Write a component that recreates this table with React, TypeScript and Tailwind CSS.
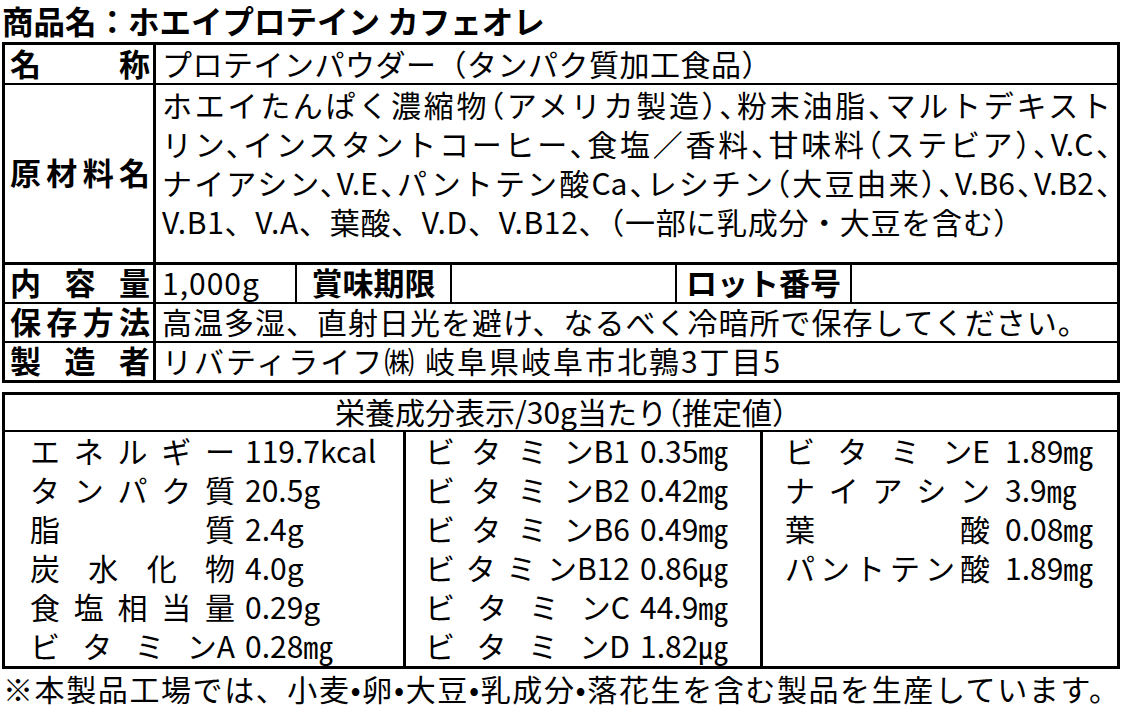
import React from 'react';

function Label({ text }: { text: string }) {
  return (
    <div className="flex w-[151px] shrink-0 items-center border-r-[3px] border-black pb-[3px] pl-[5px] pr-[3px] text-[31px] font-bold leading-[34px]">
      <span className="block w-full whitespace-nowrap text-justify [text-align-last:justify]">{text}</span>
    </div>
  );
}

function Spread({ parts }: { parts: string[] }) {
  return (
    <span className="flex w-[205px] shrink-0 justify-between whitespace-nowrap">
      {parts.map((p, i) => (
        <span key={i}>{p}</span>
      ))}
    </span>
  );
}

type Item = { parts: string[]; value: string };

function NutCol({ items, className, gap }: { items: Item[]; className: string; gap: string }) {
  return (
    <div className={className}>
      {items.map((it, i) => (
        <div key={i} className="flex h-[39px] items-center pb-[4px] leading-[34px]">
          <Spread parts={it.parts} />
          <span className={`whitespace-nowrap ${gap}`}>{it.value}</span>
        </div>
      ))}
    </div>
  );
}

export default function App() {
  const col1: Item[] = [
    { parts: ['エ', 'ネ', 'ル', 'ギ', 'ー'], value: '119.7kcal' },
    { parts: ['タ', 'ン', 'パ', 'ク', '質'], value: '20.5g' },
    { parts: ['脂', '質'], value: '2.4g' },
    { parts: ['炭', '水', '化', '物'], value: '4.0g' },
    { parts: ['食', '塩', '相', '当', '量'], value: '0.29g' },
    { parts: ['ビ', 'タ', 'ミ', 'ンA'], value: '0.28㎎' },
  ];
  const col2: Item[] = [
    { parts: ['ビ', 'タ', 'ミ', 'ンB1'], value: '0.35㎎' },
    { parts: ['ビ', 'タ', 'ミ', 'ンB2'], value: '0.42㎎' },
    { parts: ['ビ', 'タ', 'ミ', 'ンB6'], value: '0.49㎎' },
    { parts: ['ビ', 'タ', 'ミ', 'ンB12'], value: '0.86㎍' },
    { parts: ['ビ', 'タ', 'ミ', 'ンC'], value: '44.9㎎' },
    { parts: ['ビ', 'タ', 'ミ', 'ンD'], value: '1.82㎍' },
  ];
  const col3: Item[] = [
    { parts: ['ビ', 'タ', 'ミ', 'ンE'], value: '1.89㎎' },
    { parts: ['ナ', 'イ', 'ア', 'シ', 'ン'], value: '3.9㎎' },
    { parts: ['葉', '酸'], value: '0.08㎎' },
    { parts: ['パ', 'ン', 'ト', 'テ', 'ン', '酸'], value: '1.89㎎' },
  ];

  return (
    <div className="h-[709px] w-[1122px] overflow-hidden bg-white font-['Noto_Sans_CJK_JP',sans-serif] text-black">
      {/* title */}
      <div className="flex h-[42px] items-center pb-[3px] pl-[2px]">
        <h1 className="whitespace-nowrap text-[31.5px] font-bold leading-[34px]">商品名：ホエイプロテイン カフェオレ</h1>
      </div>

      {/* label table */}
      <div className="mx-[2px] border-[3px] border-black text-[30px]">
        <div className="flex h-[40px] border-b-2 border-black">
          <Label text="名称" />
          <div className="flex flex-1 items-center whitespace-nowrap pb-[3px] pl-[6px] leading-[34px] tracking-[0.5px]">
            プロテインパウダー（タンパク質加工食品）
          </div>
        </div>

        <div className="flex h-[180px] border-b-[3px] border-black">
          <Label text="原材料名" />
          <div className="flex-1 px-[6px] leading-[39px] [font-feature-settings:'halt']">
            <div className="whitespace-nowrap text-justify [text-align-last:justify]">
              ホエイたんぱく濃縮物（アメリカ製造）、粉末油脂、マルトデキスト
            </div>
            <div className="whitespace-nowrap text-justify [text-align-last:justify]">
              リン、インスタントコーヒー、食塩／香料、甘味料（ステビア）、V.C、
            </div>
            <div className="whitespace-nowrap text-justify [text-align-last:justify]">
              ナイアシン、V.E、パントテン酸Ca、レシチン（大豆由来）、V.B6、V.B2、
            </div>
            <div className="whitespace-nowrap tracking-[0.7px] [font-feature-settings:normal]">
              V.B1、V.A、葉酸、V.D、V.B12、（一部に乳成分・大豆を含む）
            </div>
          </div>
        </div>

        <div className="flex h-[39px] border-b-2 border-black leading-[34px]">
          <Label text="内容量" />
          <div className="flex w-[141px] shrink-0 items-center whitespace-nowrap border-r-2 border-black pb-[3px] pl-[6px] tracking-[1px]">1,000g</div>
          <div className="flex w-[155px] shrink-0 items-center justify-center whitespace-nowrap border-r-2 border-black pb-[3px] text-[31px] font-bold">賞味期限</div>
          <div className="w-[225px] shrink-0 border-r-2 border-black"></div>
          <div className="flex w-[175px] shrink-0 items-center justify-center whitespace-nowrap border-r-2 border-black pb-[3px] text-[31px] font-bold">ロット番号</div>
          <div className="flex-1"></div>
        </div>

        <div className="flex h-[39px] border-b-2 border-black leading-[34px]">
          <Label text="保存方法" />
          <div className="flex flex-1 items-center whitespace-nowrap pb-[3px] pl-[6px] tracking-[1px]">
            高温多湿、直射日光を避け、なるべく冷暗所で保存してください。
          </div>
        </div>

        <div className="flex h-[37px] leading-[34px]">
          <Label text="製造者" />
          <div className="flex flex-1 items-center whitespace-nowrap pb-[3px] pl-[6px] tracking-[2px]">
            リバティライフ㈱ 岐阜県岐阜市北鶉3丁目5
          </div>
        </div>
      </div>

      {/* nutrition table */}
      <div className="mx-[2px] mt-[9px] border-[3px] border-black text-[30px]">
        <div className="flex h-[37px] items-center justify-center whitespace-nowrap border-b-2 border-black pb-[3px] leading-[34px] [font-feature-settings:'halt']">
          栄養成分表示/30g当たり（推定値）
        </div>
        <div className="flex">
          <NutCol items={col1} gap="ml-[10px]" className="w-[401px] shrink-0 border-r-[3px] border-black pl-[25px]" />
          <NutCol items={col2} gap="ml-[10px]" className="w-[357px] shrink-0 border-r-[3px] border-black pl-[19px]" />
          <NutCol items={col3} gap="ml-[15px]" className="flex-1 pl-[22px]" />
        </div>
      </div>

      {/* footer note */}
      <div className="mx-[3px] flex h-[40px] items-center pb-[2px]">
        <div className="w-full whitespace-nowrap text-justify text-[30px] leading-[34px] [text-align-last:justify]">
          ※本製品工場では、小麦•卵•大豆•乳成分•落花生を含む製品を生産しています。
        </div>
      </div>
    </div>
  );
}
